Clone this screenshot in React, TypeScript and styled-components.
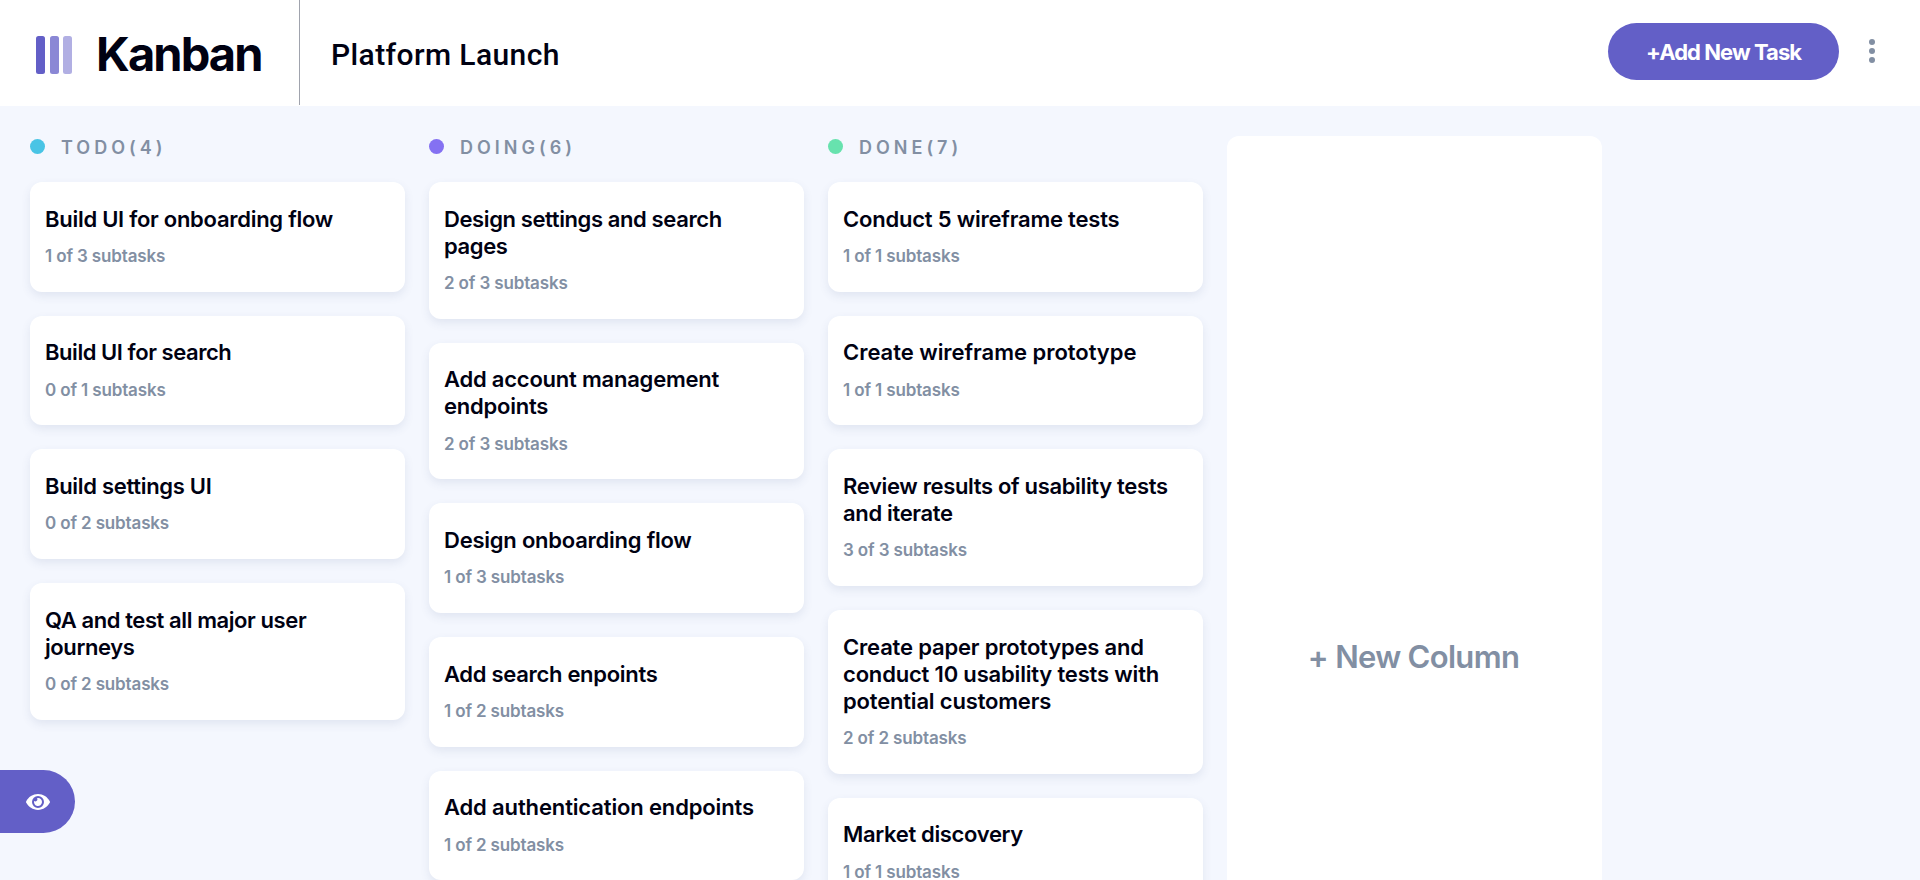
import React from "react";
import styled, { createGlobalStyle } from "styled-components";
import { FaEye } from "react-icons/fa";

const GlobalStyle = createGlobalStyle`
  * { box-sizing: border-box; }
  body {
    margin: 0;
    overflow: hidden;
    background: #f4f7fe;
    color: #000112;
    font-family: Inter, "Open Sans", sans-serif;
  }
  h1, h2, h3, p { margin: 0; }
  button { font-family: inherit; border: 0; cursor: pointer; }
`;

const Page = styled.div`
  height: 100vh;
  display: flex;
  flex-direction: column;
  overflow: hidden;
`;

const Header = styled.header`
  flex: none;
  height: 106px;
  display: flex;
  align-items: flex-start;
  background: #ffffff;
`;

const Brand = styled.div`
  width: 300px;
  height: 105px;
  padding: 36px 0 0 36px;
  display: flex;
  gap: 24px;
  border-right: 1px solid #a0a3ad;
`;

const LogoBars = styled.div`
  height: 38px;
  display: flex;
  gap: 4.5px;
`;

const LogoBar = styled.span<{ $strength: number }>`
  width: 9px;
  border-radius: 2.5px;
  background: #635fc7;
  opacity: ${(p) => p.$strength};
`;

const BrandName = styled.span`
  font-size: 47px;
  line-height: 50px;
  margin-top: -7px;
  font-weight: 650;
  letter-spacing: -1.9px;
`;

const BoardName = styled.h1`
  flex: 1;
  padding: 37px 0 0 31px;
  font-family: Roboto, sans-serif;
  font-size: 30px;
  line-height: 35px;
  font-weight: 500;
  letter-spacing: 0.4px;
`;

const HeaderActions = styled.div`
  display: flex;
  align-items: center;
  padding: 23px 45px 0 0;
  gap: 30px;
`;

const AddTaskButton = styled.button`
  width: 231px;
  height: 57px;
  padding: 0;
  border-radius: 29px;
  background: #635fc7;
  color: #ffffff;
  font-size: 22px;
  font-weight: 700;
  letter-spacing: -0.95px;
`;

const MenuButton = styled.button`
  display: flex;
  flex-direction: column;
  gap: 3px;
  padding: 0;
  margin-top: -1px;
  background: none;
`;

const MenuDot = styled.span`
  width: 6px;
  height: 6px;
  border-radius: 50%;
  background: #828fa3;
`;

const Board = styled.main`
  flex: 1;
  min-height: 0;
  display: flex;
  align-items: stretch;
  gap: 24px;
  padding: 30px 30px 0;
`;

const Column = styled.section`
  flex: none;
  width: 375px;
  display: flex;
  flex-direction: column;
`;

const ColumnHeader = styled.div`
  height: 22px;
  margin-bottom: 24px;
  display: flex;
  align-items: center;
  gap: 16px;
`;

const ColumnDot = styled.span<{ $color: string }>`
  width: 15px;
  height: 15px;
  margin-top: -1px;
  border-radius: 50%;
  background: ${(p) => p.$color};
`;

const ColumnTitle = styled.h2`
  padding-top: 2px;
  font-size: 18px;
  line-height: 22px;
  font-weight: 600;
  letter-spacing: 4px;
  color: #828fa3;
`;

const CardList = styled.div`
  display: flex;
  flex-direction: column;
  gap: 24px;
`;

const Card = styled.article`
  padding: 23.5px 15px 24.7px;
  border-radius: 12px;
  background: #ffffff;
  box-shadow: 0 4px 10px rgba(54, 78, 126, 0.1);
`;

const CardTitle = styled.h3<{ $tracking: number }>`
  font-size: 22px;
  line-height: 27px;
  font-weight: 600;
  letter-spacing: ${(p) => p.$tracking}px;
  white-space: pre-line;
`;

const CardMeta = styled.p`
  margin-top: 13.5px;
  font-size: 17px;
  line-height: 21px;
  font-weight: 600;
  letter-spacing: -0.14px;
  color: #828fa3;
`;

const NewColumn = styled.button`
  flex: none;
  width: 375px;
  height: 1040px;
  padding: 0 2px 0 0;
  border-radius: 12px;
  background: #ffffff;
  color: #828fa3;
  font-size: 31px;
  font-weight: 600;
  letter-spacing: -0.69px;
`;

const ShowSidebarButton = styled.button`
  position: fixed;
  left: 0;
  top: 770px;
  width: 75px;
  height: 63px;
  padding: 0 0 0 26px;
  display: flex;
  align-items: center;
  border-radius: 0 32px 32px 0;
  background: #635fc7;
  color: #ffffff;
  font-size: 24px;
`;

type Task = { title: string; done: number; total: number; tracking: number };
type ColumnData = { name: string; count: number; color: string; tasks: Task[] };

const columns: ColumnData[] = [
  {
    name: "TODO",
    count: 4,
    color: "#49c4e5",
    tasks: [
      { title: "Build UI for onboarding flow", done: 1, total: 3, tracking: -0.27 },
      { title: "Build UI for search", done: 0, total: 1, tracking: -0.44 },
      { title: "Build settings UI", done: 0, total: 2, tracking: -0.3 },
      { title: "QA and test all major user\njourneys", done: 0, total: 2, tracking: -0.41 },
    ],
  },
  {
    name: "DOING",
    count: 6,
    color: "#8471f2",
    tasks: [
      { title: "Design settings and search\npages", done: 2, total: 3, tracking: -0.39 },
      { title: "Add account management\nendpoints", done: 2, total: 3, tracking: -0.22 },
      { title: "Design onboarding flow", done: 1, total: 3, tracking: -0.23 },
      { title: "Add search enpoints", done: 1, total: 2, tracking: -0.3 },
      { title: "Add authentication endpoints", done: 1, total: 2, tracking: -0.14 },
    ],
  },
  {
    name: "DONE",
    count: 7,
    color: "#67e2ae",
    tasks: [
      { title: "Conduct 5 wireframe tests", done: 1, total: 1, tracking: -0.21 },
      { title: "Create wireframe prototype", done: 1, total: 1, tracking: -0.03 },
      { title: "Review results of usability tests\nand iterate", done: 3, total: 3, tracking: -0.34 },
      {
        title: "Create paper prototypes and\nconduct 10 usability tests with\npotential customers",
        done: 2,
        total: 2,
        tracking: -0.18,
      },
      { title: "Market discovery", done: 1, total: 1, tracking: -0.33 },
    ],
  },
];

export default function App() {
  return (
    <Page>
      <GlobalStyle />
      <Header>
        <Brand>
          <LogoBars>
            <LogoBar $strength={1} />
            <LogoBar $strength={0.75} />
            <LogoBar $strength={0.5} />
          </LogoBars>
          <BrandName>Kanban</BrandName>
        </Brand>
        <BoardName>Platform Launch</BoardName>
        <HeaderActions>
          <AddTaskButton>+Add New Task</AddTaskButton>
          <MenuButton aria-label="Board menu">
            <MenuDot />
            <MenuDot />
            <MenuDot />
          </MenuButton>
        </HeaderActions>
      </Header>
      <Board>
        {columns.map((column) => (
          <Column key={column.name}>
            <ColumnHeader>
              <ColumnDot $color={column.color} />
              <ColumnTitle>{`${column.name}(${column.count})`}</ColumnTitle>
            </ColumnHeader>
            <CardList>
              {column.tasks.map((task) => (
                <Card key={task.title}>
                  <CardTitle $tracking={task.tracking}>{task.title}</CardTitle>
                  <CardMeta>{`${task.done} of ${task.total} subtasks`}</CardMeta>
                </Card>
              ))}
            </CardList>
          </Column>
        ))}
        <NewColumn>+ New Column</NewColumn>
      </Board>
      <ShowSidebarButton aria-label="Show sidebar">
        <FaEye />
      </ShowSidebarButton>
    </Page>
  );
}
